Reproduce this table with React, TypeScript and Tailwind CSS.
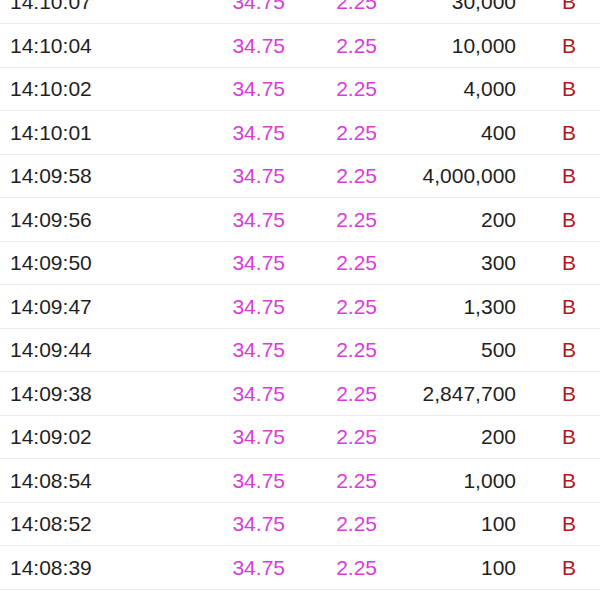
const trades = [
  { time: "14:10:07", qty: "30,000" },
  { time: "14:10:04", qty: "10,000" },
  { time: "14:10:02", qty: "4,000" },
  { time: "14:10:01", qty: "400" },
  { time: "14:09:58", qty: "4,000,000" },
  { time: "14:09:56", qty: "200" },
  { time: "14:09:50", qty: "300" },
  { time: "14:09:47", qty: "1,300" },
  { time: "14:09:44", qty: "500" },
  { time: "14:09:38", qty: "2,847,700" },
  { time: "14:09:02", qty: "200" },
  { time: "14:08:54", qty: "1,000" },
  { time: "14:08:52", qty: "100" },
  { time: "14:08:39", qty: "100" },
  { time: "14:08:31", qty: "100" },
]

export default function App() {
  return (
    <div className="h-[600px] w-[600px] overflow-hidden bg-white font-['Liberation_Sans',Arial,sans-serif] text-[21px]">
      <div className="mt-[-19.5px]">
        {trades.map((t, i) => (
          <div
            key={i}
            className="flex h-[43.54px] items-center border-b border-[#ededed] pl-[10px]"
          >
            <span className="w-[190px] text-[#1f1f1f]">{t.time}</span>
            <span className="w-[85px] text-right text-[#d93cd9]">34.75</span>
            <span className="w-[92px] text-right text-[#d93cd9]">2.25</span>
            <span className="w-[139px] text-right text-[#1f1f1f]">{t.qty}</span>
            <span className="ml-[38px] w-[30px] text-center text-[#b3161c]">B</span>
          </div>
        ))}
      </div>
    </div>
  )
}
